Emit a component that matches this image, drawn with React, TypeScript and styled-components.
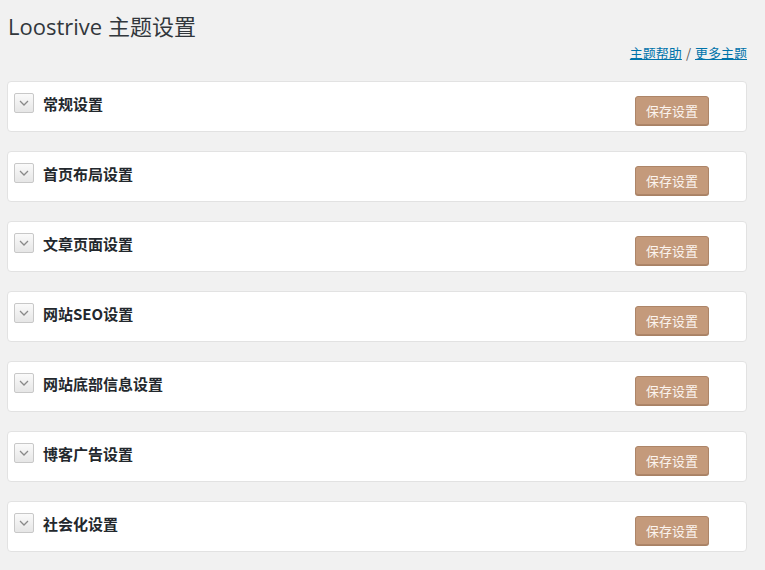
import React, { useState } from 'react';
import styled, { createGlobalStyle } from 'styled-components';

const GlobalStyle = createGlobalStyle`
  html, body {
    margin: 0;
    padding: 0;
    background: #f1f1f1;
  }
  body {
    font-family: "Open Sans", "Noto Sans CJK SC", sans-serif;
    color: #23282d;
  }
`;

const Wrap = styled.div`
  padding: 0 18px 0 7px;
  width: 765px;
  box-sizing: border-box;
`;

const Title = styled.h1`
  margin: 0;
  padding: 12px 0 0 1px;
  font-size: 22px;
  font-weight: 400;
  line-height: 29px;
  color: #32373c;
  font-family: "Open Sans", "Noto Sans CJK SC", sans-serif;
`;

const Links = styled.div`
  display: flex;
  justify-content: flex-end;
  align-items: center;
  gap: 4px;
  height: 20px;
  margin-top: 1px;
  font-size: 13px;
  color: #555;
  font-family: "Noto Sans CJK SC", sans-serif;

  a {
    color: #0073aa;
    text-decoration: underline;
  }
`;

const List = styled.div`
  display: flex;
  flex-direction: column;
  gap: 19px;
  margin-top: 19px;
`;

const Panel = styled.div`
  height: 51px;
  box-sizing: border-box;
  background: #fff;
  border: 1px solid #e2e2e2;
  border-radius: 4px;
  display: flex;
  align-items: center;
  padding: 0 37px 0 6px;
`;

const Toggle = styled.button<{ $open: boolean }>`
  width: 20px;
  height: 20px;
  padding: 0;
  margin-top: -8px;
  box-sizing: border-box;
  border: 1px solid #c8c8c8;
  border-radius: 2px;
  background: linear-gradient(#fafafa, #e6e6e6);
  display: flex;
  align-items: center;
  justify-content: center;
  cursor: pointer;

  svg {
    transform: ${({ $open }) => ($open ? 'rotate(180deg)' : 'none')};
  }
`;

const Heading = styled.h3`
  margin: -7px 0 0 9px;
  flex: 1;
  font-size: 15px;
  font-weight: 700;
  color: #23282d;
  font-family: "Noto Sans CJK SC", sans-serif;
`;

const SaveButton = styled.button`
  width: 74px;
  height: 29px;
  box-sizing: border-box;
  border: 1px solid #ad8568;
  border-radius: 3px;
  background: #c49a7b;
  color: #fbf4ee;
  font-size: 13px;
  font-family: "Noto Sans CJK SC", sans-serif;
  padding: 0;
  margin-top: 7px;
  cursor: pointer;
  box-shadow: 0 1px 0 #a88164;
`;

const sections = [
  '常规设置',
  '首页布局设置',
  '文章页面设置',
  '网站SEO设置',
  '网站底部信息设置',
  '博客广告设置',
  '社会化设置',
];

function Chevron() {
  return (
    <svg width="10" height="6" viewBox="0 0 10 6">
      <path d="M1 1 L5 5 L9 1" fill="none" stroke="#8a8a8a" strokeWidth="1.3" />
    </svg>
  );
}

function Section({ name }: { name: string }) {
  const [open, setOpen] = useState(false);
  return (
    <Panel>
      <Toggle $open={open} onClick={() => setOpen((v) => !v)}>
        <Chevron />
      </Toggle>
      <Heading>{name}</Heading>
      <SaveButton>保存设置</SaveButton>
    </Panel>
  );
}

export default function App() {
  return (
    <>
      <GlobalStyle />
      <Wrap>
        <Title>Loostrive 主题设置</Title>
        <Links>
          <a href="#">主题帮助</a>
          <span>/</span>
          <a href="#">更多主题</a>
        </Links>
        <List>
          {sections.map((s) => (
            <Section key={s} name={s} />
          ))}
        </List>
      </Wrap>
    </>
  );
}
